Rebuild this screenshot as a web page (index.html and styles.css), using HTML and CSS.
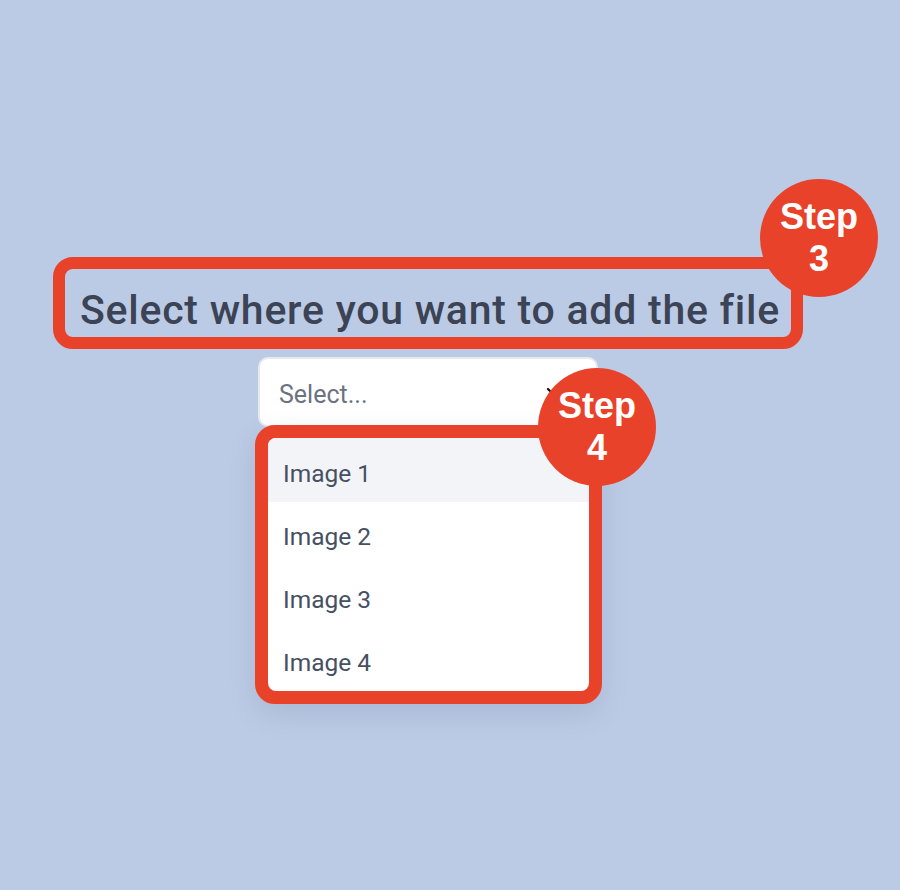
FILE: index.html
```html
<!DOCTYPE html>
<html lang="en">
<head>
  <meta charset="UTF-8">
  <meta name="viewport" content="width=device-width, initial-scale=1.0">
  <title>Select where you want to add the file</title>
  <link rel="stylesheet" href="styles.css">
</head>
<body>
  <div class="page">
    <div class="title-box">
      <h1>Select where you want to add the file</h1>
      <div class="step step-3">Step<br>3</div>
    </div>

    <div class="picker">
      <div class="select">
        <span class="placeholder">Select...</span>
        <svg class="chevron" width="14" height="10" viewBox="0 0 14 10">
          <path d="M2 2 L7 7 L12 2" fill="none" stroke="#111" stroke-width="2.2" stroke-linecap="round" stroke-linejoin="round"/>
        </svg>
      </div>

      <div class="menu-frame">
        <ul class="menu">
          <li class="active">Image 1</li>
          <li>Image 2</li>
          <li>Image 3</li>
          <li>Image 4</li>
        </ul>
        <div class="step step-4">Step<br>4</div>
      </div>
    </div>
  </div>
</body>
</html>
```

FILE: styles.css
```css
body {
  margin: 0;
  background-color: #bccbe5;
  font-family: Roboto, "Noto Sans", Arial, sans-serif;
  min-height: 890px;
}

.page {
  display: flex;
  flex-direction: column;
  align-items: flex-start;
  padding: 257px 0 0 53px;
}

.title-box {
  position: relative;
  width: 750px;
  box-sizing: border-box;
  border: 12px solid #e9422a;
  border-radius: 20px;
  padding: 14px 0 0 15px;
}

.title-box h1 {
  margin: 0;
  height: 54px;
  line-height: 54px;
  font-size: 41px;
  font-weight: 500;
  letter-spacing: 0.75px;
  color: #3b4355;
  white-space: nowrap;
}

/* step badges sit over the annotated boxes */
.step {
  position: absolute;
  width: 118px;
  height: 118px;
  border-radius: 50%;
  background-color: #e9422a;
  color: #fff;
  font-family: "Liberation Sans", Arial, sans-serif;
  font-weight: bold;
  font-size: 36px;
  line-height: 42px;
  text-align: center;
  display: flex;
  align-items: center;
  justify-content: center;
}

.step-3 {
  left: 695px;
  top: -90px;
}

.step-4 {
  left: 270px;
  top: -70px;
}

.picker {
  margin: 8px 0 0 205px;
  width: 340px;
}

.select {
  position: relative;
  height: 70px;
  box-sizing: border-box;
  background: #fff;
  border: 2px solid #e6e9ef;
  border-radius: 10px;
  display: flex;
  align-items: center;
  padding: 5px 0 0 19px;
}

.placeholder {
  font-size: 25px;
  color: #6b7280;
}

.chevron {
  position: absolute;
  right: 36px;
  top: 28px;
}

.menu-frame {
  position: relative;
  width: 347px;
  box-sizing: border-box;
  margin: -2px 0 0 -3px;
  border: 13px solid #e9422a;
  border-radius: 20px;
  background: #e9422a;
  box-shadow: 0 10px 28px rgba(40, 60, 100, 0.12);
}

.menu {
  list-style: none;
  margin: 0;
  padding: 0;
  background: #fff;
  border-radius: 8px;
  overflow: hidden;
}

.menu li {
  height: 63px;
  box-sizing: border-box;
  padding: 6px 0 0 15px;
  line-height: 57px;
  font-size: 24.5px;
  color: #465062;
}

.menu li.active {
  height: 64px;
  padding-top: 7px;
  background-color: #f3f4f8;
}
```
